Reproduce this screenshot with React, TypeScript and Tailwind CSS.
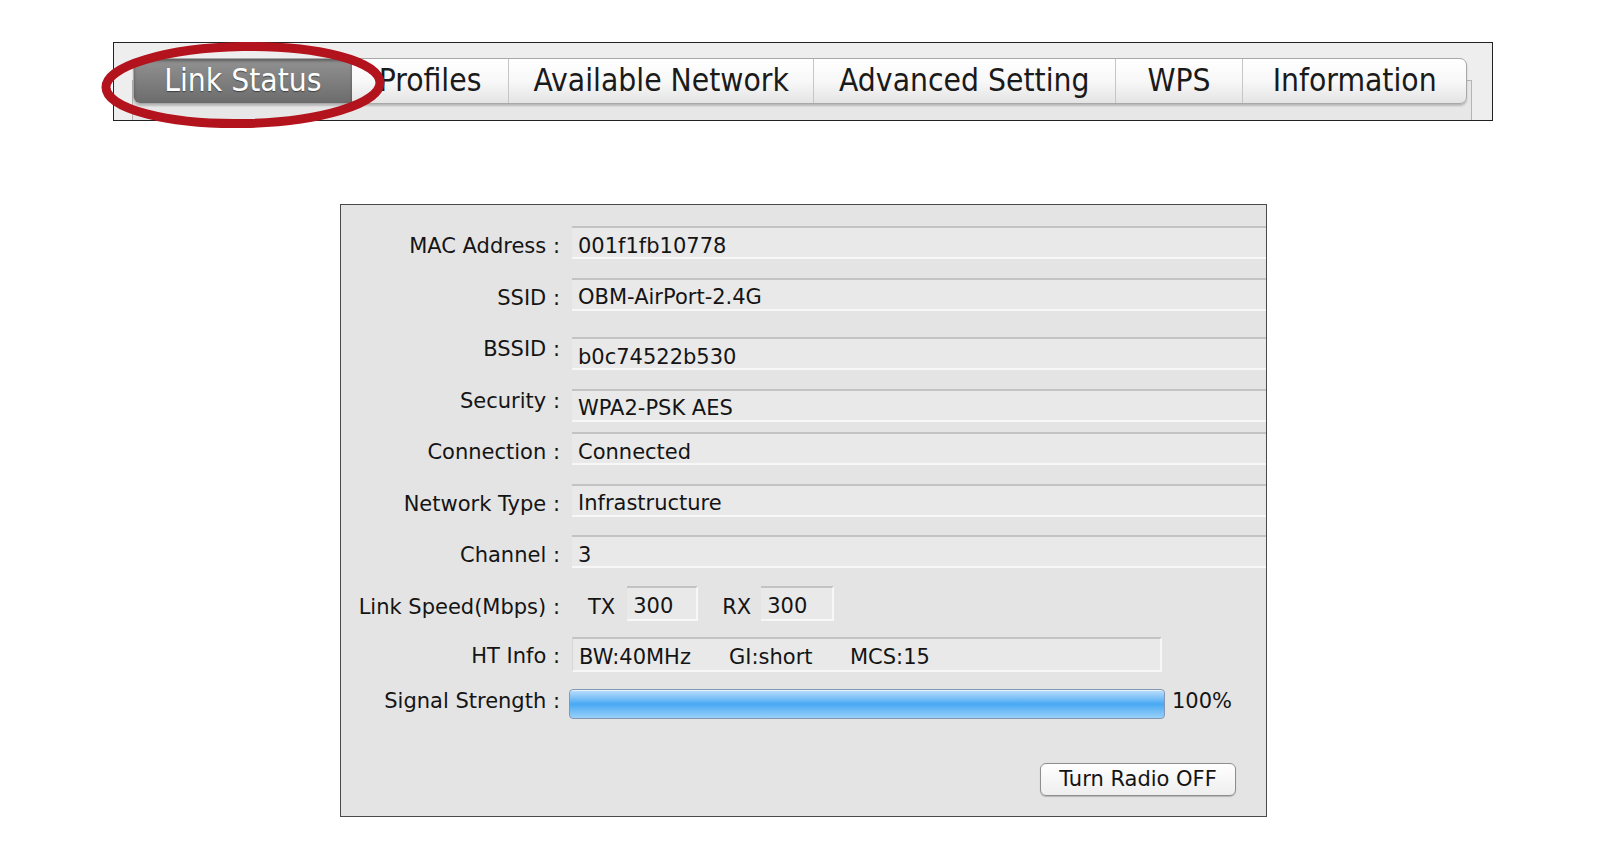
import React from 'react';

const tabFont = "font-['DejaVu_Sans_Condensed','Liberation_Sans',sans-serif]";
const bodyFont = "font-['DejaVu_Sans','Liberation_Sans',sans-serif]";

const tabs = [
  { label: 'Link Status', w: 'w-[218px]', active: true },
  { label: 'Profiles', w: 'w-[157px]' },
  { label: 'Available Network', w: 'w-[305px]' },
  { label: 'Advanced Setting', w: 'w-[302px]' },
  { label: 'WPS', w: 'w-[128px]' },
  { label: 'Information', w: 'w-[224px]' },
];

const rows = [
  { label: 'MAC Address :', value: '001f1fb10778' },
  { label: 'SSID :', value: 'OBM-AirPort-2.4G' },
  { label: 'BSSID :', value: 'b0c74522b530', low: true },
  { label: 'Security :', value: 'WPA2-PSK AES', low: true },
  { label: 'Connection :', value: 'Connected' },
  { label: 'Network Type :', value: 'Infrastructure' },
  { label: 'Channel :', value: '3' },
];

// read-only text field: darker top edge, white bottom edge, text sits low
const Field: React.FC<{ children: React.ReactNode; className?: string }> = ({ children, className = '' }) => (
  <div
    className={`h-[33px] flex items-center pl-[6px] pt-[7px] bg-[#e9e9e9] border-t-2 border-t-[#c3c3c3] border-b-2 border-b-[#f7f7f7] whitespace-nowrap ${className}`}
  >
    {children}
  </div>
);

const Label: React.FC<{ children: React.ReactNode }> = ({ children }) => (
  <div className="w-[219px] shrink-0 text-right whitespace-nowrap">{children}</div>
);

export default function App() {
  return (
    <div className={`relative min-h-[866px] bg-white text-[#141414] ${bodyFont}`}>
      {/* Tab strip */}
      <div className="ml-[113px] pt-[42px]">
        <div className={`w-[1380px] h-[79px] border border-[#222] bg-[#eeeeee] pl-[19px] pt-[15px] overflow-hidden ${tabFont}`}>
          <div className="relative z-10 flex w-[1334px] h-[46px] rounded-[7px] border border-[#a8a8a8] bg-gradient-to-b from-white via-[#f8f8f8] to-[#e4e4e4] shadow-[0_2px_2px_rgba(0,0,0,0.2)] overflow-hidden">
            {tabs.map((t, i) => (
              <div
                key={t.label}
                className={`${t.w} h-full flex items-center justify-center text-[31.5px] leading-none whitespace-nowrap ${
                  t.active
                    ? 'bg-gradient-to-b from-[#929292] to-[#6c6c6c] text-white shadow-[inset_0_2px_3px_rgba(0,0,0,0.35)] [text-shadow:0_1px_1px_rgba(0,0,0,0.45)]'
                    : 'text-[#1a1a1a]'
                } ${i > 1 ? 'border-l border-[#c6c6c6]' : ''}`}
              >
                {t.label}
              </div>
            ))}
          </div>
          <div className="-mt-[24px] -ml-[1px] w-[1340px] h-[40px] border-x border-t border-[#b4b4b4] bg-[#e7e7e7]" />
        </div>
      </div>

      {/* Red highlight */}
      <svg className="absolute z-20 left-[98px] top-[38px]" width="300" height="94" viewBox="0 0 300 94">
        <ellipse cx="145" cy="47" rx="137" ry="38.5" transform="rotate(-1 145 47)" fill="none" stroke="#b3131c" strokeWidth="9" />
      </svg>

      {/* Link status panel */}
      <div className="ml-[340px] mt-[83px] w-[927px] h-[613px] border border-[#4a4a4a] bg-[#e4e4e4] pt-[16px] text-[21px]">
        {rows.map((r) => (
          <div key={r.label} className="flex items-center h-[51.5px]">
            <Label>{r.label}</Label>
            <Field className={`flex-1 ml-[12px] ${r.low ? 'mt-[8px]' : 'mb-[8px]'}`}>{r.value}</Field>
          </div>
        ))}

        <div className="flex items-center h-[51.5px]">
          <Label>Link Speed(Mbps) :</Label>
          <span className="ml-[28px]">TX</span>
          <Field className="ml-[12px] w-[71px] h-[35px] mb-[8px] border-r-2 border-r-[#f7f7f7]">300</Field>
          <span className="ml-[24px]">RX</span>
          <Field className="ml-[10px] w-[73px] h-[35px] mb-[8px] border-r-2 border-r-[#f7f7f7]">300</Field>
        </div>

        <div className="flex items-center h-[47px]">
          <Label>HT Info :</Label>
          <Field className="ml-[12px] w-[590px] h-[35px] mb-[4px] border-r-2 border-r-[#f7f7f7] border-l border-l-[#d6d6d6]">
            <span className="w-[150px]">BW:40MHz</span>
            <span className="w-[121px]">GI:short</span>
            <span>MCS:15</span>
          </Field>
        </div>

        <div className="flex items-center h-[43px]">
          <Label>Signal Strength :</Label>
          <div className="ml-[9px] mt-[5px] w-[596px] h-[30px] rounded-[4px] border border-[#8297b3] bg-gradient-to-b from-[#bcdffb] via-[#46a9f3] to-[#97d0f8] shadow-[inset_0_1px_0_rgba(255,255,255,0.6)]" />
          <span className="ml-[7px]">100%</span>
        </div>

        <div className="flex justify-end pr-[30px] mt-[40px]">
          <button className="w-[196px] h-[33px] rounded-[6px] border border-[#8e8e8e] bg-gradient-to-b from-white to-[#eeeeee] shadow-[0_1px_1px_rgba(0,0,0,0.2)] text-[21px] leading-none text-[#141414]">
            Turn Radio OFF
          </button>
        </div>
      </div>
    </div>
  );
}
